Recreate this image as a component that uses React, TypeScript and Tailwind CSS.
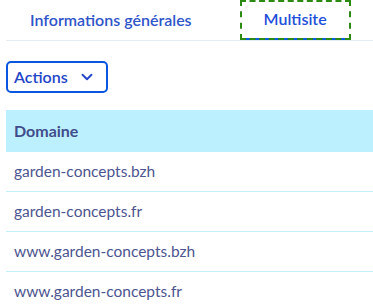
import { ChevronDown } from "lucide-react";

const domains = [
  "garden-concepts.bzh",
  "garden-concepts.fr",
  "www.garden-concepts.bzh",
  "www.garden-concepts.fr",
];

export default function App() {
  return (
    <div
      className="min-h-screen bg-white pl-[6px]"
      style={{ fontFamily: "Lato, 'Open Sans', sans-serif" }}
    >
      {/* Tabs */}
      <div className="flex gap-6 border-b border-[#e3ecf3]">
        <button className="h-10 px-6 text-[16px] font-semibold text-[#2f55c9]">
          Informations générales
        </button>
        <button className="h-10 border-b-2 border-[#0b5be0] px-6 text-[16px] font-semibold text-[#1d4fd8] outline-2 outline-dashed outline-[#2c8a12] -outline-offset-2">
          Multisite
        </button>
      </div>

      {/* Actions */}
      <div className="mt-5">
        <button className="flex h-8 w-[102px] items-center gap-3 rounded-[5px] border-2 border-[#0a56e0] pl-[6px] text-[16px] font-semibold text-[#2346c8]">
          Actions
          <ChevronDown size={18} strokeWidth={2.5} className="-ml-0.5 text-[#2346c8]" />
        </button>
      </div>

      {/* Table */}
      <div className="mt-[17px]">
        <div className="flex h-[42px] items-center bg-[#bdf0fe] px-2 text-[16px] font-bold text-[#414c8c]">
          Domaine
        </div>
        {domains.map((d, i) => (
          <div
            key={d}
            className={`flex h-10 items-center px-2 text-[15.5px] text-[#4d5590] ${
              i < domains.length - 1 ? "border-b border-[#c4eef8]" : ""
            }`}
          >
            {d}
          </div>
        ))}
      </div>
    </div>
  );
}
